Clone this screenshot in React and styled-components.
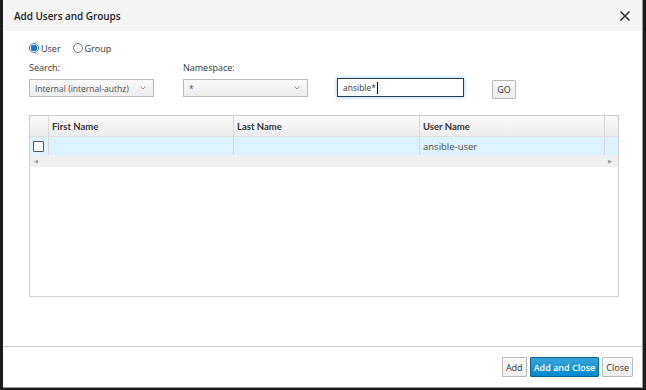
import styled, { createGlobalStyle } from "styled-components"

const GlobalStyle = createGlobalStyle`
    html, body {
        margin: 0;
        padding: 0;
        background: #1c1c1c;
        font-family: "Open Sans", "Liberation Sans", sans-serif;
        color: #363636;
    }
`

const Backdrop = styled.div`
    width: 646px;
    height: 390px;
    padding: 0 3px 0 3px;
    box-sizing: border-box;
    background: #1c1c1c;
`

const Modal = styled.div`
    width: 640px;
    height: 388px;
    background: #fff;
    border-right: 1px solid #9a9a9a;
    border-bottom: 1px solid #9a9a9a;
    box-sizing: border-box;
    display: flex;
    flex-direction: column;
`

const Header = styled.div`
    height: 31px;
    background: #f5f5f5;
    display: flex;
    align-items: center;
    justify-content: space-between;
    padding: 0 11px 0 11px;
    flex-shrink: 0;

    h4 {
        margin: 0;
        font-size: 10px;
        font-weight: 600;
        color: #1f1f1f;
        letter-spacing: -0.05px;
    }
`

const CloseX = styled.button`
    border: none;
    background: none;
    padding: 0;
    width: 12px;
    height: 12px;
    display: flex;
    cursor: pointer;
`

const Body = styled.div`
    flex: 1;
    padding: 10px 22px 0 26px;
`

const RadioRow = styled.div`
    display: flex;
    align-items: center;
    gap: 12px;
    height: 14px;
    font-size: 9px;
    color: #363636;
`

const RadioLabel = styled.label`
    display: flex;
    align-items: center;
    gap: 2px;
`

const Radio = styled.span`
    width: 10px;
    height: 10px;
    border-radius: 50%;
    box-sizing: border-box;
    border: 1px solid ${({ checked }) => checked ? "#1f7fd6" : "#777"};
    background: ${({ checked }) => checked ? "radial-gradient(circle, #1a78d8 0 3px, #fff 3.5px)" : "#fff"};
`

const FormGrid = styled.div`
    display: grid;
    grid-template-columns: 154px 154px 155px auto;
    margin-top: 6px;
    align-items: end;
`

const Field = styled.div`
    display: flex;
    flex-direction: column;
    gap: 5px;

    span {
        font-size: 9px;
        color: #363636;
    }
`

const Select = styled.div`
    width: 125px;
    height: 18px;
    box-sizing: border-box;
    border: 1px solid #bbb;
    background: linear-gradient(#fafafa, #ededed);
    font-size: 8.5px;
    color: #4d4d4d;
    white-space: nowrap;
    display: flex;
    align-items: center;
    justify-content: space-between;
    padding: 0 7px 0 5px;
`

const Input = styled.div`
    width: 127px;
    height: 19px;
    box-sizing: border-box;
    border: 1px solid #2e3d4f;
    box-shadow: 0 0 4px rgba(0, 136, 206, 0.45);
    font-size: 8.5px;
    color: #363636;
    display: flex;
    align-items: center;
    padding: 0 5px;

    i {
        display: inline-block;
        width: 1px;
        height: 12px;
        background: #111;
        margin-left: 1px;
    }
`

const Button = styled.button`
    height: ${({ h }) => h || 20}px;
    padding: 0 3px;
    font-family: inherit;
    font-size: 9px;
    border: 1px solid ${({ primary }) => primary ? "#00659c" : "#bbb"};
    background: ${({ primary }) => primary ? "linear-gradient(#39a5dc, #0088ce)" : "linear-gradient(#fafafa, #ededed)"};
    color: ${({ primary }) => primary ? "#fff" : "#363636"};
    font-weight: ${({ primary }) => primary ? 600 : 400};
    border-radius: 1px;
`

const GoWrap = styled.div`
    margin-bottom: -2px;

    button {
        width: 24px;
        padding: 0;
    }
`

const Table = styled.div`
    margin-top: 18px;
    width: 590px;
    height: 182px;
    box-sizing: border-box;
    border: 1px solid #d1d1d1;
    display: flex;
    flex-direction: column;
`

const Row = styled.div`
    display: grid;
    grid-template-columns: 18px 185px 186px 185px 1fr;
    height: ${({ h }) => h}px;
    background: ${({ bg }) => bg};
    border-bottom: ${({ line }) => line ? "1px solid #e0e0e0" : "none"};
`

const Cell = styled.div`
    border-left: ${({ first }) => first ? "none" : "1px solid #d8d8d8"};
    display: flex;
    align-items: center;
    padding-left: ${({ pl }) => pl ?? 3}px;
    font-size: 9.5px;
    font-weight: ${({ bold }) => bold ? 700 : 400};
    color: ${({ bold }) => bold ? "#363636" : "#4d4d4d"};
    font-family: ${({ bold }) => bold ? `"Lato", "Open Sans", sans-serif` : "inherit"};
`

const Check = styled.span`
    width: 9px;
    height: 9px;
    border: 1px solid #555;
    background: #fff;
    border-radius: 1px;
`

const ScrollBar = styled.div`
    height: 12px;
    background: #f0f0f0;
    display: flex;
    align-items: center;
    justify-content: space-between;
    padding: 0 6px 0 4px;
    font-size: 5px;
    color: #999;
`

const Footer = styled.div`
    height: 40px;
    border-top: 1px solid #d1d1d1;
    display: flex;
    justify-content: flex-end;
    align-items: center;
    gap: 3px;
    padding-right: 9px;
    flex-shrink: 0;
`

const Chevron = () => (
    <svg width="6" height="4" viewBox="0 0 6 4">
        <path d="M0.5 0.5 L3 3 L5.5 0.5" fill="none" stroke="#888" strokeWidth="0.9" />
    </svg>
)

const App = () => {
    return (
        <>
            <GlobalStyle />
            <Backdrop>
                <Modal>
                    <Header>
                        <h4>Add Users and Groups</h4>
                        <CloseX aria-label="close">
                            <svg width="12" height="12" viewBox="0 0 12 12">
                                <path d="M1.5 1.5 L10.5 10.5 M10.5 1.5 L1.5 10.5" stroke="#333" strokeWidth="1.6" />
                            </svg>
                        </CloseX>
                    </Header>
                    <Body>
                        <RadioRow>
                            <RadioLabel><Radio checked />User</RadioLabel>
                            <RadioLabel><Radio />Group</RadioLabel>
                        </RadioRow>
                        <FormGrid>
                            <Field>
                                <span>Search:</span>
                                <Select>Internal (internal-authz) <Chevron /></Select>
                            </Field>
                            <Field>
                                <span>Namespace:</span>
                                <Select>* <Chevron /></Select>
                            </Field>
                            <Field>
                                <Input>ansible*<i /></Input>
                            </Field>
                            <GoWrap>
                                <Button h={19}>GO</Button>
                            </GoWrap>
                        </FormGrid>
                        <Table>
                            <Row h={20} bg="linear-gradient(#fafafa, #ededed)" line>
                                <Cell first />
                                <Cell bold>First Name</Cell>
                                <Cell bold>Last Name</Cell>
                                <Cell bold>User Name</Cell>
                                <Cell />
                            </Row>
                            <Row h={18} bg="#def3ff">
                                <Cell first pl={3}><Check /></Cell>
                                <Cell />
                                <Cell />
                                <Cell>ansible-user</Cell>
                                <Cell />
                            </Row>
                            <ScrollBar>
                                <span>◀</span>
                                <span>▶</span>
                            </ScrollBar>
                        </Table>
                    </Body>
                    <Footer>
                        <Button>Add</Button>
                        <Button primary>Add and Close</Button>
                        <Button>Close</Button>
                    </Footer>
                </Modal>
            </Backdrop>
        </>
    )
}

export default App
